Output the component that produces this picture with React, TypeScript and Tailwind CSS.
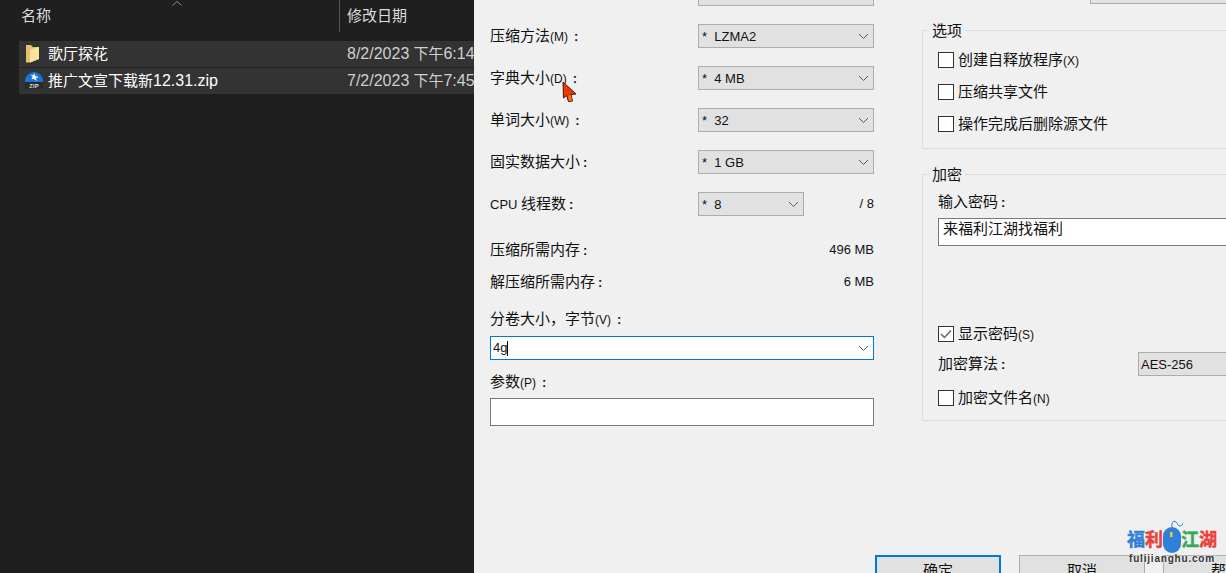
const font = { fontFamily: '"Liberation Sans", "Noto Sans CJK SC", sans-serif' };

const Chevron = () => (
  <svg width="11" height="6" viewBox="0 0 11 6" className="shrink-0">
    <path d="M1 1l4.5 4.5L10 1" fill="none" stroke="#5a5a5a" strokeWidth="1" />
  </svg>
);

const Lbl = ({ text, latin, colon }: { text: string; latin?: string; colon?: boolean }) => (
  <span className="text-[15px] leading-6 text-[#111] whitespace-nowrap">
    {text}
    {latin && <span className="text-[12px]">{latin}</span>}
    {colon && <span className={`${latin ? "ml-[6px]" : "ml-[3px]"} text-[13px] font-bold`}>:</span>}
  </span>
);

const Combo = ({ value, w = "w-[176px]" }: { value?: string; w?: string }) => (
  <div className={`${w} h-6 shrink-0 border border-[#adadad] bg-[#e1e1e1] flex items-center justify-between pl-[3px] pr-[4px] text-[13px] text-[#111]`}>
    <span className="mt-px whitespace-pre">{value}</span>
    <Chevron />
  </div>
);

const ComboRow = ({ text, latin, value }: { text: string; latin?: string; value: string }) => (
  <div className="flex items-center justify-between h-6">
    <Lbl text={text} latin={latin} colon />
    <Combo value={value} />
  </div>
);

const InfoRow = ({ text, value, className }: { text: string; value: string; className: string }) => (
  <div className={`flex items-center justify-between h-6 ${className}`}>
    <Lbl text={text} colon />
    <span className="text-[13px] text-[#111]">{value}</span>
  </div>
);

const Check = ({ text, latin, checked }: { text: string; latin?: string; checked?: boolean }) => (
  <div className="flex items-center gap-[4px] h-4">
    <div className="size-4 border border-[#333] bg-white flex items-center justify-center shrink-0">
      {checked && (
        <svg width="12" height="10" viewBox="0 0 12 10">
          <path d="M1 5l3.5 3.5L11 1.5" fill="none" stroke="#666" strokeWidth="1.5" />
        </svg>
      )}
    </div>
    <Lbl text={text} latin={latin} />
  </div>
);

const Legend = ({ text }: { text: string }) => (
  <span className="absolute -top-[12px] left-[6px] bg-[#f0f0f0] px-[3px] text-[15px] leading-6 text-[#111]">{text}</span>
);

const FolderIcon = () => (
  <svg width="13" height="19" viewBox="0 0 13 19" className="shrink-0 ml-[7px] -mt-px">
    <path d="M0 1h5l1.500 2H13v12l-9 3.500H0z" fill="#e6c26a" />
    <path d="M4 5.500L13 3v12l-9 3.500z" fill="#fbe39c" />
  </svg>
);

const ZipIcon = () => (
  <svg width="20" height="20" viewBox="0 0 20 20" className="shrink-0 ml-[5px] -mt-[2px]">
    <path d="M1 11a9 9 0 0118 0v1H1z" fill="#1677d8" />
    <path d="M1 12h18v4a3 3 0 01-3 3H4a3 3 0 01-3-3z" fill="#2b2b2b" />
    <path d="M10 2.500l1.200 3.300 3.300 1.400-2.600 1 1 2.800-3.400-2.300-2 .8 1.200-3-2.200-1.200 3.300-.2z" fill="#fff" />
    <text x="10" y="18" textAnchor="middle" fontSize="6" fontWeight="700" fill="#ddd">ZIP</text>
  </svg>
);

const FileRow = ({ icon, name, ext, date, time }: { icon: React.ReactNode; name: string; ext?: string; date: string; time: string }) => (
  <div className="ml-[19px] h-[26px] flex items-center bg-[#333333] whitespace-nowrap overflow-hidden">
    <div className="w-[29px] flex shrink-0">{icon}</div>
    <div className="w-[299px] shrink-0 text-[15px] text-white">
      {name}
      {ext && <span className="text-[16px]">{ext}</span>}
    </div>
    <div className="text-[15px] text-[#cfcfcf]">
      <span className="text-[16px]">{date}</span> 下午<span className="text-[16px]">{time}</span>
    </div>
  </div>
);

const Explorer = () => (
  <div className="w-[474px] shrink-0 bg-[#1f1f1f] overflow-hidden">
    <div className="flex h-8 text-[15px] text-[#dcdcdc]">
      <div className="relative w-[340px] border-r border-[#555] pl-[21px] flex items-center">
        名称
        <svg width="10" height="5" viewBox="0 0 10 5" className="absolute left-[172px] top-[1px]">
          <path d="M.5 4.500L5 .5l4.500 4" fill="none" stroke="#8a8a8a" />
        </svg>
      </div>
      <div className="pl-[7px] flex items-center">修改日期</div>
    </div>
    <div className="mt-[9px] flex flex-col gap-px">
      <FileRow icon={<FolderIcon />} name="歌厅探花" date="8/2/2023" time="6:14" />
      <FileRow icon={<ZipIcon />} name="推广文宣下载新" ext="12.31.zip" date="7/2/2023" time="7:45" />
    </div>
  </div>
);

const OptionsColumn = () => (
  <div className="w-[384px] shrink-0 -mt-[18px]">
    <div className="flex flex-col gap-[18px]">
      <div className="flex justify-end h-6">
        <Combo />
      </div>
      <ComboRow text="压缩方法" latin="(M)" value="*  LZMA2" />
      <ComboRow text="字典大小" latin="(D)" value="*  4 MB" />
      <ComboRow text="单词大小" latin="(W)" value="*  32" />
      <ComboRow text="固实数据大小" value="*  1 GB" />
      <div className="flex items-center h-6">
        <span className="w-[208px] shrink-0 text-[15px] leading-6 text-[#111]">
          <span className="text-[13px]">CPU </span>线程数<span className="ml-[3px] text-[13px] font-bold">:</span>
        </span>
        <Combo value="*  8" w="w-[106px]" />
        <span className="ml-auto text-[13px] text-[#111]">/ 8</span>
      </div>
    </div>
    <InfoRow text="压缩所需内存" value="496 MB" className="mt-[22px]" />
    <InfoRow text="解压缩所需内存" value="6 MB" className="mt-[8px]" />
    <div className="mt-[13px] h-6">
      <Lbl text="分卷大小，字节" latin="(V)" colon />
    </div>
    <div className="mt-[5px] h-6 border border-[#0078d7] bg-white flex items-center justify-between pl-[2px] pr-[4px] text-[13px] text-[#111]">
      <span className="flex items-center">
        4g<span className="w-px h-[15px] bg-black" />
      </span>
      <Chevron />
    </div>
    <div className="mt-[10px] h-6">
      <Lbl text="参数" latin="(P)" colon />
    </div>
    <div className="mt-1 h-7 border border-[#7a7a7a] bg-white" />
  </div>
);

const SecurityColumn = () => (
  <div className="ml-12 w-[340px] shrink-0">
    <div className="ml-[168px] h-[5px] -mt-px border border-[#adadad] bg-[#e1e1e1]" />
    <div className="relative mt-[26px] border border-[#dcdcdc] pl-[15px] pt-[21px] pb-4 flex flex-col gap-4">
      <Legend text="选项" />
      <Check text="创建自释放程序" latin="(X)" />
      <Check text="压缩共享文件" />
      <Check text="操作完成后删除源文件" />
    </div>
    <div className="relative mt-[25px] border border-[#dcdcdc] pl-[15px] pt-[15px] pb-[14px]">
      <Legend text="加密" />
      <div className="h-6">
        <Lbl text="输入密码" colon />
      </div>
      <div className="mt-1 h-7 w-[320px] border border-[#7a7a7a] bg-white pl-1 text-[15px] leading-[19px] text-[#111]">
        来福利江湖找福利
      </div>
      <div className="mt-20">
        <Check text="显示密码" latin="(S)" checked />
      </div>
      <div className="mt-[10px] flex items-center h-6">
        <span className="w-[200px] shrink-0">
          <Lbl text="加密算法" colon />
        </span>
        <div className="w-[110px] h-6 border border-[#adadad] bg-[#e1e1e1] pl-[2px] text-[13px] leading-[23px] text-[#111]">AES-256</div>
      </div>
      <div className="mt-[14px]">
        <Check text="加密文件名" latin="(N)" />
      </div>
    </div>
  </div>
);

const Btn = ({ text, primary }: { text: string; primary?: boolean }) => (
  <div className={`w-[126px] h-8 shrink-0 bg-[#e1e1e1] flex items-center justify-center text-[15px] text-[#111] ${primary ? "border-2 border-[#0078d7]" : "border border-[#adadad]"}`}>
    {text}
  </div>
);

const Watermark = () => (
  <div className="absolute left-[1127px] top-[520px] w-[90px] flex flex-col items-center">
    <div className="flex h-[34px] text-[18px] leading-none font-bold [-webkit-text-stroke:0.5px_currentColor]">
      <span className="mt-[11px] text-[#2f80d8]">福</span>
      <span className="mt-[11px] text-[#e8423c]">利</span>
      <svg width="20" height="34" viewBox="0 0 20 34" className="shrink-0 -mr-[2px]">
        <path d="M9 7C8 2 11 0 13 2s2 4 4 4 3-2 3-3" fill="none" stroke="#2f80d8" strokeWidth="1" />
        <rect x="0" y="7" width="18" height="26" rx="9" fill="#2f80d8" />
        <rect x="7" y="12" width="2.500" height="5" fill="#f3c63a" />
      </svg>
      <span className="mt-[11px] text-[#38a85a]">江</span>
      <span className="mt-[11px] text-[#e8423c]">湖</span>
    </div>
    <div className="-mt-px text-[10px] leading-[11px] font-bold tracking-[0.8px] text-[#333] whitespace-nowrap [text-shadow:0_0_2px_#fff]">fulijianghu.com</div>
  </div>
);

const Cursor = () => (
  <svg width="18" height="24" viewBox="0 0 18 24" className="absolute left-[561px] top-[80px]">
    <path d="M2 2l13 12-5 .5 1.500 6.500-4 .5-2-6-3 2.500z" fill="#e83a08" stroke="#4a1606" strokeWidth="1" />
    <path d="M7 16l3-1 1 5.500-3 .5z" fill="#ff6a1e" />
  </svg>
);

export default function App() {
  return (
    <div className="relative flex h-[573px] w-[1226px] overflow-hidden" style={font}>
      <Explorer />
      <div className="flex-1 min-w-0 bg-[#f0f0f0] overflow-hidden">
        <div className="flex pl-4 h-[555px]">
          <OptionsColumn />
          <SecurityColumn />
        </div>
        <div className="flex gap-[18px] pl-[401px]">
          <Btn text="确定" primary />
          <Btn text="取消" />
          <Btn text="帮助" />
        </div>
      </div>
      <Cursor />
      <Watermark />
    </div>
  );
}
